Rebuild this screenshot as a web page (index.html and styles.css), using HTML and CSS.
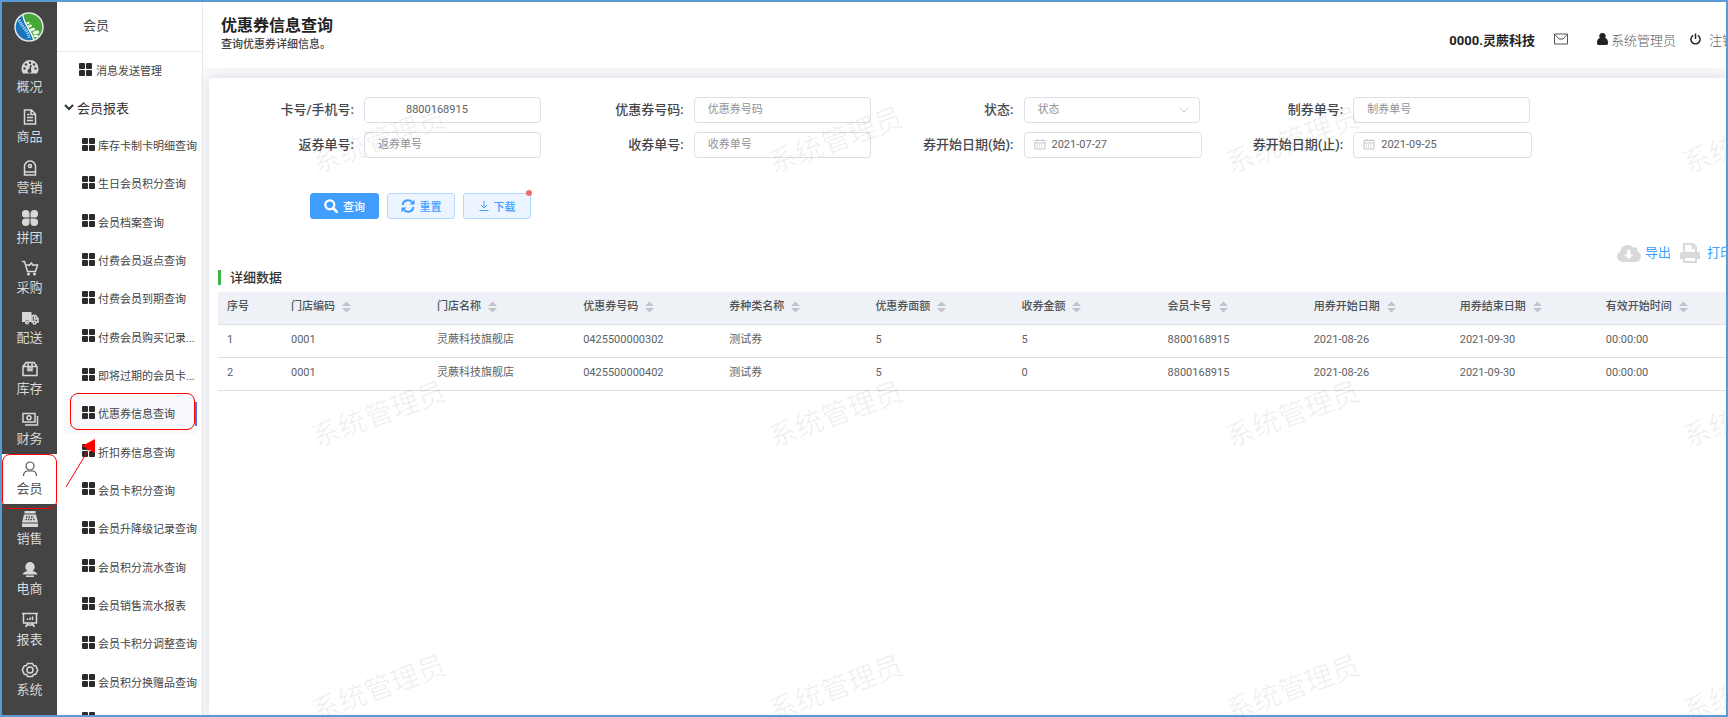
FILE: index.html
```html
<!DOCTYPE html>
<html lang="zh-CN">
<head>
  <meta charset="UTF-8">
  <title>优惠券信息查询</title>
  <link rel="stylesheet" href="styles.css">
</head>
<body>
<!-- 公用图标 -->
<svg class="defs" aria-hidden="true">
  <symbol id="grid" viewBox="0 0 13 13">
    <rect width="6" height="6" rx="1"/><rect x="7" width="6" height="6" rx="1"/>
    <rect y="7" width="6" height="6" rx="1"/><rect x="7" y="7" width="6" height="6" rx="1"/>
  </symbol>
  <symbol id="sort" viewBox="0 0 9 12">
    <path d="M4.500 .5L9 5H0zM0 7h9l-4.500 4.500z"/>
  </symbol>
  <symbol id="date" viewBox="0 0 12 12">
    <path d="M1 2.500h10v8.500H1zM1 5h10M3.500 1v1.500M8.500 1v1.500" fill="none" stroke="currentColor"/>
    <path d="M3 7h6M3 9h6" fill="none" stroke="currentColor" stroke-dasharray="1 1"/>
  </symbol>
</svg>
<div class="app">
  <!-- 一级菜单 -->
  <nav class="nav">
    <a href="#" class="logo" aria-label="首页">
      <svg viewBox="0 0 30 30">
        <circle cx="15" cy="15" r="14" fill="#45a735"/>
        <path d="M9 2.500A14 14 0 0 0 19 28.500C18 23 16 20 13.500 15 11 10.500 9 7 9 2.500z" fill="#1676bd"/>
        <path d="M9 2.500c0 5 2 8 4.500 12.500S18 22 20 28" fill="none" stroke="#fff" stroke-width="1.300"/>
        <g fill="#eef7ea">
          <ellipse cx="14" cy="11" rx="1.800" ry="1" transform="rotate(-25 14 11)"/>
          <ellipse cx="16" cy="14" rx="2.200" ry="1.200" transform="rotate(-20 16 14)"/>
          <ellipse cx="18.500" cy="17.500" rx="2.700" ry="1.500" transform="rotate(-15 18.500 17.500)"/>
          <ellipse cx="22" cy="20.500" rx="3.300" ry="1.700" transform="rotate(-15 22 20.500)"/>
          <ellipse cx="22" cy="24" rx="2.500" ry="1.300"/>
        </g>
        <path d="M5 8c2 4 5 8 7.500 11 1.500 2 2.500 4 3 8" fill="none" stroke="#b9dcf2" stroke-width="3" stroke-dasharray="1.200 1"/>
        <circle cx="15" cy="15" r="14" fill="none" stroke="#e4e4e4" stroke-width="1.500"/>
      </svg>
    </a>
    <ul>
      <li><a href="#">
        <svg viewBox="0 0 18 16"><path fill="currentColor" stroke="none" d="M9 1a8.500 8.500 0 0 0-8.500 8.500c0 2 .5 3.500 1.500 5h14c1-1.500 1.500-3 1.500-5A8.500 8.500 0 0 0 9 1z"/><g fill="#444" stroke="none"><circle cx="3.500" cy="9.500" r="1.200"/><circle cx="5" cy="5.500" r="1.200"/><circle cx="9" cy="3.700" r="1.200"/><circle cx="13" cy="5.500" r="1.200"/><circle cx="14.500" cy="9.500" r="1.200"/><circle cx="8.500" cy="12" r="2"/></g><path d="M8.500 12l1.500-6" stroke="#444"/></svg>
        <span>概况</span></a></li>
      <li><a href="#">
        <svg viewBox="0 0 18 16"><path d="M3.500 1h7l4 4v10h-11zM10 1v4.500h4.500M6 5.500h2.500M6 8.500h6M6 11.500h6"/></svg>
        <span>商品</span></a></li>
      <li><a href="#">
        <svg viewBox="0 0 18 16"><path d="M3.500 15V5.500C4.500 2.500 6.500 1 9 1s4.500 1.500 5.500 4.500V15zM3.500 12h11"/><circle cx="9" cy="6" r="1.500"/></svg>
        <span>营销</span></a></li>
      <li><a href="#">
        <svg viewBox="0 0 18 16"><g fill="currentColor" stroke="none"><path d="M8.500 7.600H4.500A3.800 3.800 0 1 1 8.500 3.800zM9.500 7.600h4A3.800 3.800 0 1 0 9.500 3.800zM8.500 8.400H4.500a3.800 3.800 0 1 0 4 3.800zM9.500 8.400h4a3.800 3.800 0 1 1-4 3.800z"/></g></svg>
        <span>拼团</span></a></li>
      <li><a href="#">
        <svg viewBox="0 0 18 16"><path d="M1 1.500h2.500l3 10h8l2-6.500h-4M5 5h3M8 6l2.300-3L12.600 6"/><circle cx="7.500" cy="14" r=".8"/><circle cx="13.500" cy="14" r=".8"/></svg>
        <span>采购</span></a></li>
      <li><a href="#">
        <svg viewBox="0 0 18 16"><path fill="currentColor" stroke="none" d="M1 2h9.500v10H8a2 2 0 0 0-4 0H1z"/><path d="M11 5.500h3.500l2.500 3v3.500h-6zM13.500 6v3H17"/><circle cx="6" cy="12.500" r="1.300"/><circle cx="13.500" cy="12.500" r="1.500" fill="#444"/></svg>
        <span>配送</span></a></li>
      <li><a href="#">
        <svg viewBox="0 0 18 16"><path d="M2 5.500L5 1.500h8l3 4v9H2zM2 5.500h14M7 1.500v8h4v-8M9 5v4"/></svg>
        <span>库存</span></a></li>
      <li><a href="#">
        <svg viewBox="0 0 18 16"><path d="M2 2.500h12v8.500H2zM4 14h12.500V5"/><circle cx="8" cy="6.700" r="2"/></svg>
        <span>财务</span></a></li>
      <li class="on"><a href="#">
        <svg viewBox="0 0 18 16"><circle cx="9" cy="5" r="4"/><path d="M2.500 15c0-3.500 2-5 4.500-5h4c2.500 0 4.500 1.500 4.500 5"/></svg>
        <span>会员</span></a></li>
      <li><a href="#">
        <svg viewBox="0 0 18 16"><path fill="currentColor" stroke="none" d="M3.500 0h11v2.500h-11zM3 3.500h12l2 8H1zM1 12.500h16V16H1z"/><path d="M5 6h8M4.500 8.500h9" stroke="#444" stroke-dasharray="1.500 1"/></svg>
        <span>销售</span></a></li>
      <li><a href="#">
        <svg viewBox="0 0 18 16"><path fill="currentColor" stroke="none" d="M9 1a4.700 4.700 0 0 0-4.700 4.700c0 2 1 3.500 2.200 4.300C4 10.500 2 11.500 1.500 13.500h15C16 11.500 14 10.500 11.500 10c1.200-.8 2.200-2.300 2.200-4.300A4.700 4.700 0 0 0 9 1zM5 14.500h8V16H5z"/></svg>
        <span>电商</span></a></li>
      <li><a href="#">
        <svg viewBox="0 0 18 16"><path d="M1 1.500h16M2.500 1.500v9.500h13V1.500M7 11l-2.500 4M11 11l2.500 4M6.500 13h5M6.500 8V6.500M9 8V5.500M11.500 8V4.500"/></svg>
        <span>报表</span></a></li>
      <li><a href="#">
        <svg viewBox="0 0 18 16"><path d="M6.500 1.500h5l1 2 2.200.2 2 4.300-2 4.300-2.200.2-1 2h-5l-1-2-2.200-.2-2-4.300 2-4.300 2.200-.2z"/><circle cx="9" cy="8" r="3"/></svg>
        <span>系统</span></a></li>
    </ul>
  </nav>

  <!-- 二级菜单 -->
  <aside class="menu">
    <h2>会员</h2>
    <a href="#" class="item top"><svg><use href="#grid"/></svg><span>消息发送管理</span></a>
    <button type="button" class="group">
      <svg viewBox="0 0 10 8"><path d="M1 2l4 4 4-4" fill="none" stroke="currentColor" stroke-width="2"/></svg>会员报表
    </button>
    <ul>
      <li><a href="#" class="item"><svg><use href="#grid"/></svg><span>库存卡制卡明细查询</span></a></li>
      <li><a href="#" class="item"><svg><use href="#grid"/></svg><span>生日会员积分查询</span></a></li>
      <li><a href="#" class="item"><svg><use href="#grid"/></svg><span>会员档案查询</span></a></li>
      <li><a href="#" class="item"><svg><use href="#grid"/></svg><span>付费会员返点查询</span></a></li>
      <li><a href="#" class="item"><svg><use href="#grid"/></svg><span>付费会员到期查询</span></a></li>
      <li><a href="#" class="item"><svg><use href="#grid"/></svg><span>付费会员购买记录...</span></a></li>
      <li><a href="#" class="item"><svg><use href="#grid"/></svg><span>即将过期的会员卡...</span></a></li>
      <li class="on"><a href="#" class="item"><svg><use href="#grid"/></svg><span>优惠券信息查询</span></a>
        <svg class="arrow" viewBox="0 0 32 50"><path d="M1 48L24 10" stroke="#f00"/><path d="M30 0v14L17 7z" fill="#f00"/></svg>
      </li>
      <li><a href="#" class="item"><svg><use href="#grid"/></svg><span>折扣券信息查询</span></a></li>
      <li><a href="#" class="item"><svg><use href="#grid"/></svg><span>会员卡积分查询</span></a></li>
      <li><a href="#" class="item"><svg><use href="#grid"/></svg><span>会员升降级记录查询</span></a></li>
      <li><a href="#" class="item"><svg><use href="#grid"/></svg><span>会员积分流水查询</span></a></li>
      <li><a href="#" class="item"><svg><use href="#grid"/></svg><span>会员销售流水报表</span></a></li>
      <li><a href="#" class="item"><svg><use href="#grid"/></svg><span>会员卡积分调整查询</span></a></li>
      <li><a href="#" class="item"><svg><use href="#grid"/></svg><span>会员积分换赠品查询</span></a></li>
      <li><a href="#" class="item" aria-label="更多"><svg><use href="#grid"/></svg></a></li>
    </ul>
  </aside>

  <div class="main">
    <header class="head">
      <div class="title">
        <h1>优惠券信息查询</h1>
        <p>查询优惠券详细信息。</p>
      </div>
      <div class="user">
        <b>0000.灵蕨科技</b>
        <button type="button" class="mail" aria-label="消息"><svg viewBox="0 0 14 12"><path d="M.5 1h13v10H.5zM1 1.500L5 6h4l4-4.500" fill="none" stroke="currentColor"/></svg></button>
        <a href="#" class="admin"><svg viewBox="0 0 11 12"><path d="M5.500 0a3 3 0 0 1 2.500 5c2 .5 3 2 3 5 0 1-.5 2-1.500 2h-8C.5 12 0 11 0 10c0-3 1-4.500 3-5a3 3 0 0 1 2.500-5z"/></svg>系统管理员</a>
        <a href="#" class="logout"><svg viewBox="0 0 12 12"><path d="M3.500 2a5 5 0 1 0 5 0M6 0v6" fill="none" stroke="currentColor" stroke-width="1.600"/></svg>注销</a>
      </div>
    </header>

    <section class="card">
      <form>
        <div class="fields">
          <div class="field"><label for="card">卡号/手机号:</label><input id="card" class="pick" type="text" value="8800168915"></div>
          <div class="field"><label for="code">优惠券号码:</label><input id="code" type="text" placeholder="优惠券号码"></div>
          <div class="field"><label for="state">状态:</label>
            <div class="wrap">
              <select id="state"><option>状态</option></select>
              <svg class="down" viewBox="0 0 10 6"><path d="M.5 .5L5 5 9.500 .5" fill="none" stroke="currentColor"/></svg>
            </div>
          </div>
          <div class="field"><label for="make">制券单号:</label><input id="make" type="text" placeholder="制券单号"></div>
          <div class="field"><label for="back">返券单号:</label><input id="back" type="text" placeholder="返券单号"></div>
          <div class="field"><label for="recv">收券单号:</label><input id="recv" type="text" placeholder="收券单号"></div>
          <div class="field date"><label for="start">券开始日期(始):</label>
            <div class="wrap"><input id="start" type="text" value="2021-07-27"><svg class="cal"><use href="#date"/></svg></div>
          </div>
          <div class="field date"><label for="end">券开始日期(止):</label>
            <div class="wrap"><input id="end" type="text" value="2021-09-25"><svg class="cal"><use href="#date"/></svg></div>
          </div>
        </div>
        <div class="btns">
          <button type="submit" class="btn primary"><svg viewBox="0 0 14 14"><circle cx="5.800" cy="5.800" r="4.500" fill="none" stroke="currentColor" stroke-width="2.200"/><path d="M9 9l4 4" stroke="currentColor" stroke-width="2.600" stroke-linecap="round"/></svg>查询</button>
          <button type="reset" class="btn"><svg viewBox="0 0 14 14"><path d="M1.500 6A5.500 5.500 0 0 1 11 3M12.500 8A5.500 5.500 0 0 1 3 11" fill="none" stroke="currentColor" stroke-width="2"/><path d="M13.500 .5v5h-5zM.5 13.500v-5h5z" fill="currentColor"/></svg>重置</button>
          <button type="button" class="btn dot"><svg class="thin" viewBox="0 0 10 10"><path d="M5 0v7M2 4l3 3 3-3M.5 9.500h9" fill="none" stroke="currentColor"/></svg>下载</button>
        </div>
      </form>

      <div class="tools">
        <a href="#"><svg viewBox="0 0 24 20"><path fill="#d9d9d9" d="M5.500 19a5.500 5.500 0 0 1-2-10.500A7 7 0 0 1 16 4.500c2.500-1 5 1 4.500 4A5.500 5.500 0 0 1 18.500 19z"/><path fill="#fff" d="M10 7h3.500v4.500h3L11.800 16 7 11.500h3z"/></svg>导出</a>
        <a href="#" class="print"><svg viewBox="0 0 20 20"><path fill="none" stroke="#d9d9d9" stroke-width="2" d="M4 10V1h9l3 3v6M12.500 1v4H16"/><path fill="#d9d9d9" d="M2 9h16q2 0 2 2v5H0v-5q0-2 2-2z"/><path fill="#fff" stroke="#d9d9d9" stroke-width="2" d="M4 14h12v5H4z"/></svg>打印</a>
      </div>

      <h3>详细数据</h3>
      <div class="scroll">
        <table>
          <thead>
            <tr>
              <th class="no">序号</th>
              <th>门店编码<svg><use href="#sort"/></svg></th>
              <th>门店名称<svg><use href="#sort"/></svg></th>
              <th>优惠券号码<svg><use href="#sort"/></svg></th>
              <th>券种类名称<svg><use href="#sort"/></svg></th>
              <th>优惠券面额<svg><use href="#sort"/></svg></th>
              <th>收券金额<svg><use href="#sort"/></svg></th>
              <th>会员卡号<svg><use href="#sort"/></svg></th>
              <th>用券开始日期<svg><use href="#sort"/></svg></th>
              <th>用券结束日期<svg><use href="#sort"/></svg></th>
              <th>有效开始时间<svg><use href="#sort"/></svg></th>
            </tr>
          </thead>
          <tbody>
            <tr><td>1</td><td>0001</td><td>灵蕨科技旗舰店</td><td>0425500000302</td><td>测试券</td><td>5</td><td>5</td><td>8800168915</td><td>2021-08-26</td><td>2021-09-30</td><td>00:00:00</td></tr>
            <tr><td>2</td><td>0001</td><td>灵蕨科技旗舰店</td><td>0425500000402</td><td>测试券</td><td>5</td><td>0</td><td>8800168915</td><td>2021-08-26</td><td>2021-09-30</td><td>00:00:00</td></tr>
          </tbody>
        </table>
      </div>

      <!-- 水印 -->
      <div class="mark" aria-hidden="true">
        <span>系统管理员</span><span>系统管理员</span><span>系统管理员</span><span>系统管理员</span>
        <span>系统管理员</span><span>系统管理员</span><span>系统管理员</span><span>系统管理员</span>
        <span>系统管理员</span><span>系统管理员</span><span>系统管理员</span><span>系统管理员</span>
      </div>
    </section>
  </div>
</div>
</body>
</html>
```

FILE: styles.css
```css
* {
  margin: 0;
  padding: 0;
  box-sizing: border-box;
}
body, input, select, button {
  font-family: Roboto, "Noto Sans CJK SC", sans-serif;
}
body {
  font-size: 11px;
  color: #606266;
}
ul {
  list-style: none;
}
a {
  color: inherit;
  text-decoration: none;
}
svg {
  display: block;
  flex: none;
}
.defs {
  position: absolute;
  width: 0;
  height: 0;
}
.app {
  display: flex;
  height: 100vh;
  border: 2px solid #5b9bd5;
  overflow: hidden;
}

/* 一级菜单 */
.nav {
  flex: none;
  width: 55px;
  display: flex;
  flex-direction: column;
  padding-bottom: 10px;
  background: #444;
  color: #d8d8d8;
}
.logo {
  height: 50px;
  padding: 10px 12px;
}
.logo svg {
  width: 30px;
  height: 30px;
}
.nav ul {
  flex: 1;
  display: flex;
  flex-direction: column;
}
.nav li {
  flex: 1;
  position: relative;
}
.nav li a {
  height: 100%;
  display: flex;
  flex-direction: column;
  align-items: center;
  justify-content: center;
  gap: 4px;
  font-size: 13px;
  line-height: 16px;
}
.nav li svg {
  width: 18px;
  height: 16px;
  fill: none;
  stroke: currentColor;
  stroke-width: 1.5;
}
.nav .on {
  background: #fff;
  color: #555;
}
.nav .on svg {
  stroke-width: 1.2;
}
/* 红框标注 */
.nav .on::after,
.menu .on::after {
  content: "";
  position: absolute;
  z-index: 2;
  border: 1px solid #f00;
  border-radius: 8px;
  pointer-events: none;
}
.nav .on::after {
  inset: 0 0 -5px 0;
}
.menu .on::after {
  inset: -2px 2px 4px 6px;
}

/* 二级菜单 */
.menu {
  flex: none;
  width: 146px;
  display: flex;
  flex-direction: column;
  border-right: 1px solid #e8e9ee;
  background: #fff;
  color: #444;
}
.menu h2 {
  height: 50px;
  padding-left: 26px;
  border-bottom: 1px solid #ebebeb;
  font-size: 13px;
  font-weight: 400;
  line-height: 48px;
}
.item {
  display: flex;
  align-items: center;
  gap: 3px;
  height: 100%;
  padding: 0 0 2px 18px;
  white-space: nowrap;
}
.item svg {
  width: 13px;
  height: 13px;
  margin-bottom: 2px;
  fill: #2b2b2b;
}
.item.top {
  height: 38px;
  padding-left: 22px;
  gap: 4px;
}
.group {
  display: flex;
  align-items: center;
  gap: 3px;
  height: 37px;
  padding: 0 0 3px 7px;
  border: 0;
  background: none;
  color: #333;
  font-size: 13px;
}
.group svg {
  width: 10px;
  height: 8px;
}
/* 列表比窗口略长，最后一项被裁掉一部分 */
.menu ul {
  flex: 1;
  display: grid;
  grid-auto-rows: 1fr;
  margin-bottom: -25px;
  padding: 0 5px 0 7px;
}
.menu li {
  position: relative;
}
.menu .on {
  background: #f8f9fc;
  z-index: 1;
}
.menu .on::before {
  content: "";
  position: absolute;
  right: 0;
  top: 7px;
  width: 2px;
  height: 24px;
  background: #4a6cf7;
}
.arrow {
  position: absolute;
  left: 1px;
  top: 44px;
  width: 32px;
  height: 50px;
  pointer-events: none;
}

/* 右侧 */
.main {
  flex: 1;
  min-width: 0;
  display: flex;
  flex-direction: column;
  background: #f7f8fa;
}
.head {
  height: 66px;
  display: flex;
  justify-content: space-between;
  padding-left: 18px;
  background: #fff;
}
.title {
  padding-top: 13px;
}
.title h1 {
  font-size: 16px;
  line-height: 22px;
  color: #222;
}
.title p {
  color: #444;
  font-weight: 500;
  line-height: 16px;
}
.user {
  display: flex;
  align-items: center;
  height: 74px;
  margin-right: -9px;
  font-size: 13px;
  white-space: nowrap;
}
.user b {
  color: #222;
}
.mail {
  margin: 0 29px 0 19px;
  border: 0;
  background: none;
  color: #555;
}
.mail svg {
  width: 14px;
  height: 12px;
}
.admin, .logout {
  display: flex;
  align-items: center;
  font-weight: 300;
}
.admin {
  gap: 3px;
  margin-right: 14px;
}
.logout {
  gap: 8px;
}
.admin svg, .logout svg {
  width: 11px;
  height: 12px;
  color: #222;
  fill: #222;
}

.card {
  flex: 1;
  position: relative;
  margin: 10px 0 0 6px;
  padding-top: 19px;
  border-radius: 4px 0 0 0;
  background: #fff;
  box-shadow: 0 0 12px rgba(50, 50, 93, .13);
}
.fields {
  display: grid;
  grid-template-columns: repeat(4, 1fr);
  row-gap: 9px;
  padding: 0 196px 0 2px;
}
.field {
  display: flex;
  align-items: center;
  gap: 10px;
}
.field.date {
  margin-right: -2px;
}
.field label {
  flex: none;
  width: 143px;
  padding-bottom: 3px;
  color: #44474c;
  font-size: 13px;
  font-weight: 500;
  text-align: right;
}
.wrap {
  position: relative;
  flex: 1;
}
input, select {
  width: 100%;
  min-width: 0;
  height: 26px;
  padding: 0 13px 1px;
  border: 1px solid #dcdfe6;
  border-radius: 4px;
  background: #fff;
  color: #606266;
  font-size: 11px;
}
.field > input {
  flex: 1;
}
input::placeholder {
  color: #8f9299;
}
select {
  appearance: none;
  color: #8f9299;
}
.pick {
  padding-left: 41px;
}
.date input {
  padding-left: 27px;
}
.down {
  position: absolute;
  right: 11px;
  top: 10px;
  width: 10px;
  height: 6px;
  color: #c0c4cc;
}
.cal {
  position: absolute;
  left: 10px;
  top: 6px;
  width: 12px;
  height: 12px;
  color: #c0c4cc;
}
.btns {
  display: flex;
  gap: 8px;
  padding: 35px 0 0 101px;
}
.btn {
  position: relative;
  display: flex;
  align-items: center;
  justify-content: center;
  gap: 5px;
  width: 68px;
  height: 26px;
  border: 1px solid #b3d8ff;
  border-radius: 3px;
  background: #ecf5ff;
  color: #409eff;
  font-size: 11px;
  font-weight: 500;
}
.btn.primary {
  width: 69px;
  border-color: #409eff;
  background: #409eff;
  color: #fff;
}
.btn svg {
  width: 14px;
  height: 14px;
}
.btn .thin {
  width: 10px;
  height: 10px;
}
.dot::after {
  content: "";
  position: absolute;
  right: -2px;
  top: -4px;
  width: 6px;
  height: 6px;
  border-radius: 50%;
  background: #f56c6c;
}

.tools {
  display: flex;
  justify-content: flex-end;
  gap: 9px;
  margin: 24px -7px 0 0;
  color: #409eff;
  font-size: 13px;
  line-height: 18px;
  white-space: nowrap;
}
.tools a {
  display: flex;
  align-items: center;
  gap: 4px;
}
.tools .print {
  gap: 7px;
}
.tools svg {
  width: 24px;
  height: 20px;
}
.tools .print svg {
  width: 20px;
}

h3 {
  margin: 7px 0 7px 9px;
  padding-left: 9px;
  border-left: 3px solid #3fb54a;
  color: #333;
  font-size: 13px;
  font-weight: 500;
  line-height: 15px;
}
.scroll {
  margin-left: 9px;
  overflow: hidden;
}
table {
  width: 100%;
  min-width: 1525px;
  table-layout: fixed;
  border-collapse: collapse;
}
th, td {
  height: 33px;
  padding: 0 9px 2px;
  border-bottom: 1px solid #dcdee2;
  line-height: 16px;
  text-align: left;
  white-space: nowrap;
}
th {
  height: 32px;
  background: #eef1f6;
  color: #4f5257;
  font-weight: 500;
}
th.no {
  width: 64px;
}
th svg {
  display: inline-block;
  width: 9px;
  height: 12px;
  margin-left: 7px;
  fill: #c0c4cc;
  vertical-align: -3px;
}

/* 水印 */
.mark {
  position: absolute;
  inset: 0;
  display: grid;
  grid-template-columns: repeat(4, 457px);
  grid-auto-rows: 274px;
  padding: 49px 0 0 100px;
  overflow: hidden;
  pointer-events: none;
}
.mark span {
  width: 140px;
  height: 28px;
  color: rgba(0, 0, 0, .06);
  font-size: 28px;
  line-height: 28px;
  transform: rotate(-20deg);
}
```
